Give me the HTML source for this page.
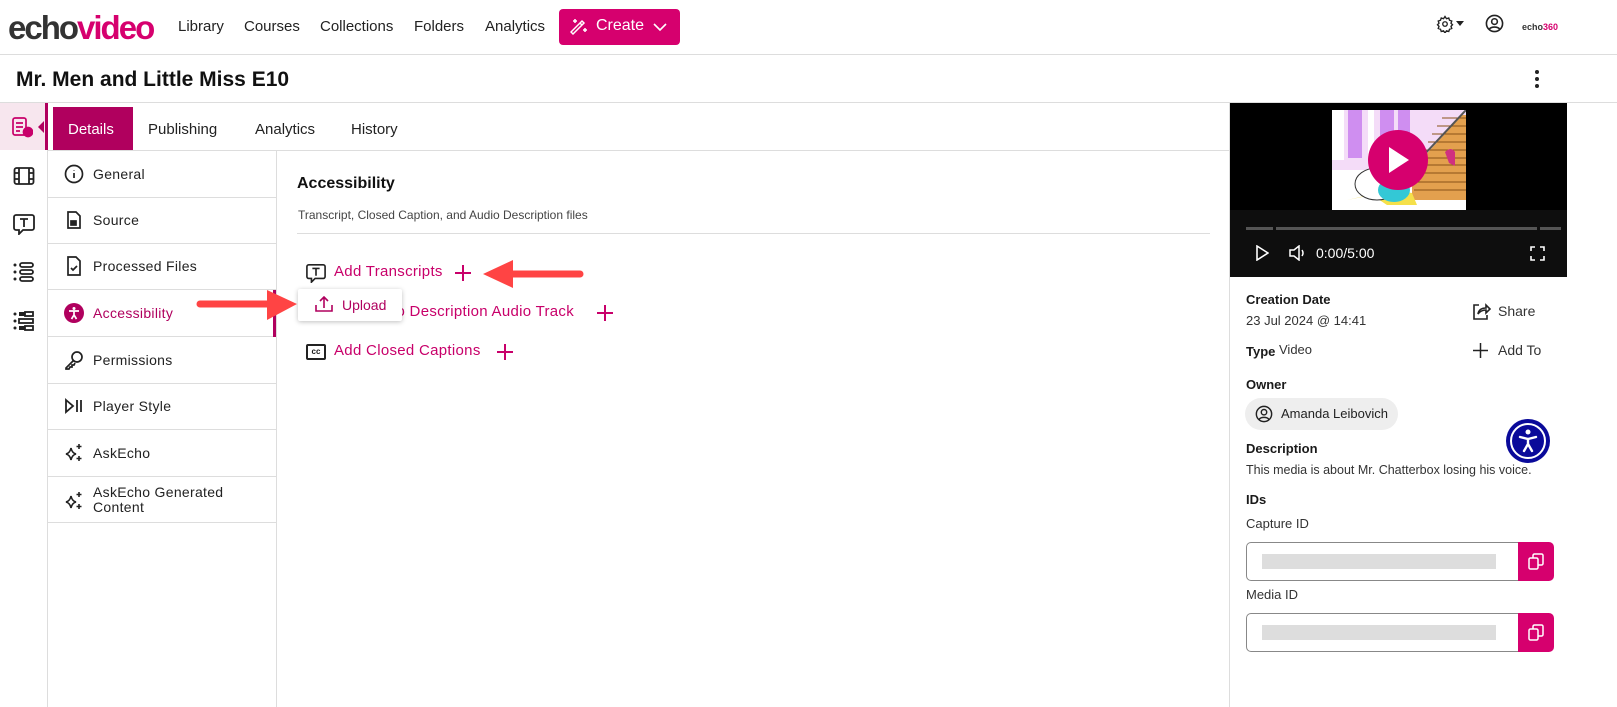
<!DOCTYPE html>
<html><head><meta charset="utf-8"><style>
*{box-sizing:border-box;margin:0;padding:0}
body{width:1617px;height:707px;overflow:hidden;background:#fff;font-family:"Liberation Sans",sans-serif;color:#1a1a1a;position:relative}
.abs{position:absolute}
.nav a{position:absolute;top:18px;font-size:15px;color:#222}
.hline{position:absolute;height:1px;background:#ddd}
.vline{position:absolute;width:1px;background:#ddd}
.side div.it{position:absolute;left:48px;width:228px;height:47px;border-bottom:1px solid #ddd;font-size:14px;letter-spacing:.3px;color:#222}
.it span{position:absolute;left:45px;top:15px}
.it svg{position:absolute;left:16px;top:13px}
.mg{color:#c8006a}
</style></head><body>
<!-- header -->
<div class="abs" style="left:8px;top:9px;font-size:33px;font-weight:bold;letter-spacing:-2px;color:#333">echo<span style="color:#d6006e">video</span></div>
<div class="nav"><a style="left:178px">Library</a><a style="left:244px">Courses</a><a style="left:320px">Collections</a><a style="left:414px">Folders</a><a style="left:485px">Analytics</a></div>
<div class="abs" style="left:559px;top:9px;width:121px;height:36px;background:#d6006e;border-radius:4px;color:#fff;font-size:16px">
<svg class="abs" style="left:11px;top:9px" width="18" height="18" viewBox="0 0 18 18" fill="none" stroke="#fff" stroke-width="1.5"><path d="M3 16L14 5l-2-2L1 14z M12 7l-2-2"/><path d="M5 1v4M3 3h4M15 10v4M13 12h4"/></svg>
<span class="abs" style="left:37px;top:8px">Create</span>
<svg class="abs" style="left:94px;top:14px" width="14" height="9" viewBox="0 0 14 9"><path d="M1 1l6 6 6-6" fill="none" stroke="#fff" stroke-width="1.6"/></svg></div>
<svg class="abs" style="left:1436px;top:15px" width="18" height="18" viewBox="0 0 24 24" fill="none" stroke="#222" stroke-width="1.8"><circle cx="12" cy="12" r="3"/><path d="M12 2l2 3 3-1 1 3 3 1-1 3 2 2-2 2 1 3-3 1-1 3-3-1-2 3-2-3-3 1-1-3-3-1 1-3-2-2 2-2-1-3 3-1 1-3 3 1z"/></svg>
<div class="abs" style="left:1456px;top:21px;border:4px solid transparent;border-top:5px solid #222"></div>
<svg class="abs" style="left:1485px;top:14px" width="19" height="19" viewBox="0 0 20 20" fill="none" stroke="#222" stroke-width="1.7"><circle cx="10" cy="10" r="8.5"/><circle cx="10" cy="8" r="3"/><path d="M4.5 16c2-3 9-3 11 0"/></svg>
<div class="abs" style="left:1522px;top:22px;font-size:9px;font-weight:bold;color:#333">echo<span style="color:#d6006e">360</span></div>
<div class="hline" style="left:0;top:54px;width:1617px"></div>
<div class="abs" style="left:16px;top:68px;font-size:21px;font-weight:bold;color:#111">Mr. Men and Little Miss E10</div>
<div class="abs" style="left:1535px;top:70px;width:4px;height:4px;border-radius:2px;background:#222;box-shadow:0 7px #222,0 14px #222"></div>
<div class="hline" style="left:0;top:102px;width:1617px"></div>
<!-- left rail -->
<div class="abs" style="left:0;top:103px;width:45px;height:47px;background:#f7e6ee"></div>
<div class="abs" style="left:45px;top:103px;width:3px;height:47px;background:#b0005e"></div>
<div class="abs" style="left:38px;top:121px;border:6px solid transparent;border-right:6px solid #b0005e;border-left:0"></div>
<svg class="abs" style="left:11px;top:116px" width="22" height="22" viewBox="0 0 22 22" fill="none" stroke="#c8006a" stroke-width="1.7"><rect x="2" y="2" width="13" height="17" rx="2"/><path d="M5 7h7M5 11h7M5 15h4"/><circle cx="17" cy="16" r="4.5" fill="#c8006a"/></svg>
<div class="vline" style="left:47px;top:150px;height:557px"></div>
<svg class="abs" style="left:13px;top:166px" width="22" height="20" viewBox="0 0 22 20" fill="none" stroke="#222" stroke-width="1.8"><rect x="1.5" y="2" width="19" height="16" rx="2"/><path d="M6 2v16M16 2v16M1.5 7h4.5M1.5 13h4.5M16 7h4.5M16 13h4.5"/></svg>
<svg class="abs" style="left:13px;top:213px" width="22" height="22" viewBox="0 0 22 22" fill="none" stroke="#222" stroke-width="1.8"><path d="M3 2h16a2 2 0 012 2v11a2 2 0 01-2 2H10l-4 4v-4H3a2 2 0 01-2-2V4a2 2 0 012-2z"/><path d="M7 6h8M11 6v8"/></svg>
<svg class="abs" style="left:13px;top:261px" width="22" height="22" viewBox="0 0 22 22" fill="#222"><circle cx="2" cy="4" r="1.5"/><circle cx="2" cy="11" r="1.5"/><circle cx="2" cy="18" r="1.5"/><g fill="none" stroke="#222" stroke-width="1.8"><rect x="7" y="2" width="13" height="4" rx="2"/><rect x="7" y="9" width="13" height="4" rx="2"/><rect x="7" y="16" width="13" height="4" rx="2"/></g></svg>
<svg class="abs" style="left:13px;top:311px" width="22" height="20" viewBox="0 0 22 20" fill="#222"><circle cx="2" cy="3" r="1.5"/><circle cx="2" cy="10" r="1.5"/><circle cx="2" cy="17" r="1.5"/><rect x="6" y="1" width="6" height="4"/><rect x="6" y="8" width="14" height="4" fill="none" stroke="#222" stroke-width="1.8"/><rect x="6" y="15" width="6" height="4"/><rect x="12" y="1" width="8" height="4" fill="none" stroke="#222" stroke-width="1.8"/><rect x="12" y="15" width="8" height="4" fill="none" stroke="#222" stroke-width="1.8"/></svg>
<!-- tabs -->
<div class="abs" style="left:53px;top:107px;width:80px;height:43px;background:#b0005e;color:#fff;font-size:15px;padding:14px 0 0 15px">Details</div>
<div class="abs" style="left:148px;top:121px;font-size:15px;color:#222">Publishing</div>
<div class="abs" style="left:255px;top:121px;font-size:15px;color:#222">Analytics</div>
<div class="abs" style="left:351px;top:121px;font-size:15px;color:#222">History</div>
<div class="hline" style="left:48px;top:150px;width:1182px"></div>
<!-- side nav -->
<div class="vline" style="left:276px;top:151px;height:556px"></div>
<div class="side">
<div class="it" style="top:151px"><svg width="20" height="20" viewBox="0 0 20 20" fill="none" stroke="#222" stroke-width="1.7"><circle cx="10" cy="10" r="8.5"/><path d="M10 9v5M10 6v.5"/></svg><span>General</span></div>
<div class="it" style="top:197px"><svg width="20" height="20" viewBox="0 0 20 20" fill="none" stroke="#222" stroke-width="1.7"><path d="M4 2h8l4 4v12H4z"/><rect x="7" y="11" width="5" height="4" fill="#222"/></svg><span>Source</span></div>
<div class="it" style="top:243px;height:47px"><svg width="20" height="20" viewBox="0 0 20 20" fill="none" stroke="#222" stroke-width="1.7"><path d="M4 1h8l4 4v14H4z"/><path d="M7 12l2 2 4-4"/></svg><span>Processed Files</span></div>
<div class="it" style="top:290px"><svg width="20" height="20" viewBox="0 0 20 20"><circle cx="10" cy="10" r="10" fill="#b0005e"/><circle cx="10" cy="5.5" r="1.5" fill="#fff"/><path d="M5 8h10M10 8v4l-2.5 4M10 12l2.5 4" stroke="#fff" stroke-width="1.7" fill="none"/></svg><span class="mg" style="color:#b0005e">Accessibility</span></div>
<div class="it" style="top:337px"><svg width="20" height="20" viewBox="0 0 20 20" fill="none" stroke="#222" stroke-width="1.7"><circle cx="13" cy="7" r="5"/><path d="M9.5 10.5L2 18v1h3l1-2h2v-2h2l1-2"/></svg><span>Permissions</span></div>
<div class="it" style="top:383px"><svg width="20" height="20" viewBox="0 0 20 20" fill="none" stroke="#222" stroke-width="1.8"><path d="M2 4l7 6-7 6z M13 4v12M17 4v12"/></svg><span>Player Style</span></div>
<div class="it" style="top:430px"><svg width="20" height="20" viewBox="0 0 20 20" fill="none" stroke="#222" stroke-width="1.6"><path d="M7 5q1 5 5 6q-4 1-5 6q-1-5-5-6q4-1 5-6z"/><path d="M15 1v5M12.5 3.5h5M15 13v5M12.5 15.5h5"/></svg><span>AskEcho</span></div>
<div class="it" style="top:476px"><svg width="20" height="20" viewBox="0 0 20 20" fill="none" stroke="#222" stroke-width="1.6" style="top:15px"><path d="M7 5q1 5 5 6q-4 1-5 6q-1-5-5-6q4-1 5-6z"/><path d="M15 1v5M12.5 3.5h5M15 13v5M12.5 15.5h5"/></svg><span style="top:9px;line-height:15px">AskEcho Generated<br>Content</span></div>
</div>
<div class="abs" style="left:273px;top:290px;width:3px;height:47px;background:#b0005e"></div>
<!-- content -->
<div class="abs" style="left:297px;top:175px;font-size:16px;font-weight:bold;color:#111">Accessibility</div>
<div class="abs" style="left:298px;top:208px;font-size:12px;color:#444">Transcript, Closed Caption, and Audio Description files</div>
<div class="hline" style="left:297px;top:233px;width:913px"></div>
<svg class="abs" style="left:306px;top:263px" width="20" height="20" viewBox="0 0 22 22" fill="none" stroke="#222" stroke-width="1.8"><path d="M3 2h16a2 2 0 012 2v11a2 2 0 01-2 2H10l-4 4v-4H3a2 2 0 01-2-2V4a2 2 0 012-2z"/><path d="M7 6h8M11 6v8"/></svg>
<div class="abs mg" style="left:334px;top:263px;font-size:15px;letter-spacing:.3px">Add Transcripts</div>
<svg class="abs" style="left:455px;top:265px" width="16" height="16"><path d="M8 0v16M0 8h16" stroke="#c8006a" stroke-width="2"/></svg>
<div class="abs" style="left:306px;top:303px;width:20px;height:18px;border:2px solid #222;border-radius:2px"></div>
<div class="abs mg" style="left:334px;top:303px;font-size:15px;letter-spacing:.3px">Add Audio Description Audio Track</div>
<svg class="abs" style="left:597px;top:305px" width="16" height="16"><path d="M8 0v16M0 8h16" stroke="#c8006a" stroke-width="2"/></svg>
<div class="abs" style="left:306px;top:344px;width:20px;height:16px;border:2px solid #222;border-radius:2px;font-size:8px;font-weight:bold;text-align:center;line-height:12px">cc</div>
<div class="abs mg" style="left:334px;top:342px;font-size:15px;letter-spacing:.3px">Add Closed Captions</div>
<svg class="abs" style="left:497px;top:344px" width="16" height="16"><path d="M8 0v16M0 8h16" stroke="#c8006a" stroke-width="2"/></svg>
<!-- upload popup -->
<div class="abs" style="left:298px;top:289px;width:104px;height:32px;background:#fff;box-shadow:0 1px 5px rgba(0,0,0,.25);border-radius:2px"></div>
<svg class="abs" style="left:315px;top:296px" width="18" height="17" viewBox="0 0 18 17" fill="none" stroke="#b0005e" stroke-width="1.6"><path d="M9 12V2M5 5l4-4 4 4M1 9v6h16V9"/></svg>
<div class="abs" style="left:342px;top:297px;font-size:14px;color:#b0005e">Upload</div>
<!-- arrows -->
<svg class="abs" style="left:195px;top:288px" width="105" height="34"><path d="M5 16H75" stroke="#f44" stroke-width="7" stroke-linecap="round"/><path d="M72 2L102 16 72 32z" fill="#f44"/></svg>
<svg class="abs" style="left:480px;top:257px" width="105" height="34"><path d="M30 17H100" stroke="#f44" stroke-width="7" stroke-linecap="round"/><path d="M33 3L3 17 33 31z" fill="#f44"/></svg>
<!-- right panel -->
<div class="vline" style="left:1229px;top:103px;height:604px"></div>
<div class="abs" style="left:1230px;top:103px;width:337px;height:107px;background:#000"></div>
<svg class="abs" style="left:1332px;top:110px" width="134" height="100" viewBox="0 0 134 100">
<rect width="134" height="100" fill="#fff"/>
<rect x="0" y="0" width="134" height="60" fill="#f4dcf8"/>
<rect x="0" y="0" width="12" height="50" fill="#fff"/>
<rect x="16" y="0" width="14" height="48" fill="#cf8ef0"/><rect x="36" y="0" width="6" height="48" fill="#fff"/><rect x="48" y="0" width="14" height="48" fill="#cf8ef0"/><rect x="66" y="0" width="12" height="40" fill="#cf8ef0"/>
<path d="M75 95L134 30V95z" fill="#fff"/>
<path d="M78 62L130 5h4V90H78z" fill="#e3a04e"/>
<path d="M85 55h49M88 48h46M92 40h42M96 32h38M100 24h34M105 16h29M110 8h24M82 63h52M82 72h52M82 80h52" stroke="#8a5218" stroke-width="1"/>
<path d="M74 64L134 0" stroke="#555" stroke-width="2"/>
<path d="M113 42q6-6 10 0l0 14-6-3z" fill="#d03080"/>
<rect x="0" y="60" width="80" height="40" fill="#fff"/>
<path d="M15 90l25-5 15 10 30 0-5-12-20-3z" fill="#f5e04a"/>
<ellipse cx="45" cy="74" rx="22" ry="16" fill="#fff" stroke="#333"/>
<ellipse cx="62" cy="80" rx="16" ry="12" fill="#33c8d6"/>
</svg>
<div class="abs" style="left:1368px;top:130px;width:60px;height:60px;border-radius:30px;background:#d6006e"></div>
<div class="abs" style="left:1389px;top:147px;border-left:20px solid #fff;border-top:13px solid transparent;border-bottom:13px solid transparent"></div>
<div class="abs" style="left:1230px;top:210px;width:337px;height:67px;background:#0e0e0e"></div>
<div class="abs" style="left:1246px;top:227px;width:27px;height:3px;background:#555"></div>
<div class="abs" style="left:1276px;top:227px;width:261px;height:3px;background:#555"></div>
<div class="abs" style="left:1540px;top:227px;width:21px;height:3px;background:#555"></div>
<svg class="abs" style="left:1255px;top:245px" width="14" height="16"><path d="M2 1l11 7-11 7z" fill="none" stroke="#fff" stroke-width="1.6"/></svg>
<svg class="abs" style="left:1289px;top:245px" width="20" height="16"><path d="M1 5h4l5-4v14l-5-4H1z" fill="none" stroke="#fff" stroke-width="1.5"/><path d="M13 5q2 3 0 6" fill="none" stroke="#fff" stroke-width="1.5"/></svg>
<div class="abs" style="left:1316px;top:245px;font-size:14px;color:#fff">0:00/5:00</div>
<svg class="abs" style="left:1530px;top:246px" width="15" height="15"><path d="M1 5V1h4M10 1h4v4M14 10v4h-4M5 14H1v-4" fill="none" stroke="#fff" stroke-width="1.6"/></svg>
<div class="abs" style="left:1246px;top:292px;font-size:13px;font-weight:bold">Creation Date</div>
<div class="abs" style="left:1246px;top:313px;font-size:13px;color:#333">23 Jul 2024 @ 14:41</div>
<svg class="abs" style="left:1472px;top:302px" width="19" height="18" viewBox="0 0 19 18" fill="none" stroke="#222" stroke-width="1.6"><path d="M7 3H2v14h13v-4"/><path d="M6 12q1-6 8-6V3l4 4-4 4V8q-5 0-8 4z"/></svg>
<div class="abs" style="left:1498px;top:303px;font-size:14px;color:#333">Share</div>
<div class="abs" style="left:1246px;top:344px;font-size:13px;font-weight:bold">Type</div>
<div class="abs" style="left:1279px;top:342px;font-size:13px;color:#333">Video</div>
<svg class="abs" style="left:1473px;top:343px" width="15" height="15"><path d="M7.5 0v15M0 7.5h15" stroke="#222" stroke-width="1.5"/></svg>
<div class="abs" style="left:1498px;top:342px;font-size:14px;color:#333">Add To</div>
<div class="abs" style="left:1246px;top:377px;font-size:13px;font-weight:bold">Owner</div>
<div class="abs" style="left:1245px;top:398px;width:153px;height:32px;border-radius:16px;background:#eee"></div>
<svg class="abs" style="left:1255px;top:405px" width="18" height="18" viewBox="0 0 20 20" fill="none" stroke="#222" stroke-width="1.6"><circle cx="10" cy="10" r="8.5"/><circle cx="10" cy="8" r="3"/><path d="M4.5 16c2-3 9-3 11 0"/></svg>
<div class="abs" style="left:1281px;top:406px;font-size:13px;color:#222">Amanda Leibovich</div>
<div class="abs" style="left:1246px;top:441px;font-size:13px;font-weight:bold">Description</div>
<div class="abs" style="left:1246px;top:463px;font-size:12.5px;color:#333">This media is about Mr. Chatterbox losing his voice.</div>
<div class="abs" style="left:1246px;top:492px;font-size:13px;font-weight:bold">IDs</div>
<div class="abs" style="left:1246px;top:516px;font-size:13px;color:#333">Capture ID</div>
<div class="abs" style="left:1246px;top:542px;width:273px;height:39px;border:1px solid #888;border-radius:5px 0 0 5px"></div>
<div class="abs" style="left:1262px;top:554px;width:234px;height:15px;background:#ddd"></div>
<div class="abs" style="left:1518px;top:542px;width:36px;height:39px;background:#d6006e;border-radius:0 5px 5px 0"></div>
<svg class="abs" style="left:1528px;top:553px" width="16" height="17" viewBox="0 0 16 17" fill="none" stroke="#fff" stroke-width="1.5"><rect x="1" y="5" width="9" height="11" rx="1.5"/><path d="M5 5V2.5A1.5 1.5 0 016.5 1h7A1.5 1.5 0 0115 2.5v8a1.5 1.5 0 01-1.5 1.5H10"/></svg>
<div class="abs" style="left:1246px;top:587px;font-size:13px;color:#333">Media ID</div>
<div class="abs" style="left:1246px;top:613px;width:273px;height:39px;border:1px solid #888;border-radius:5px 0 0 5px"></div>
<div class="abs" style="left:1262px;top:625px;width:234px;height:15px;background:#ddd"></div>
<div class="abs" style="left:1518px;top:613px;width:36px;height:39px;background:#d6006e;border-radius:0 5px 5px 0"></div>
<svg class="abs" style="left:1528px;top:624px" width="16" height="17" viewBox="0 0 16 17" fill="none" stroke="#fff" stroke-width="1.5"><rect x="1" y="5" width="9" height="11" rx="1.5"/><path d="M5 5V2.5A1.5 1.5 0 016.5 1h7A1.5 1.5 0 0115 2.5v8a1.5 1.5 0 01-1.5 1.5H10"/></svg>
<!-- a11y widget -->
<div class="abs" style="left:1506px;top:419px;width:44px;height:44px;border-radius:22px;background:#0a0a9a"></div>
<div class="abs" style="left:1510px;top:423px;width:36px;height:36px;border-radius:18px;border:2px solid #fff"></div>
<svg class="abs" style="left:1518px;top:429px" width="20" height="24" viewBox="0 0 20 24"><circle cx="10" cy="3" r="2.5" fill="#fff"/><path d="M2 8l8 2 8-2M10 10v5l-4 7M10 15l4 7" stroke="#fff" stroke-width="2.4" fill="none" stroke-linecap="round"/></svg>
</body></html>
